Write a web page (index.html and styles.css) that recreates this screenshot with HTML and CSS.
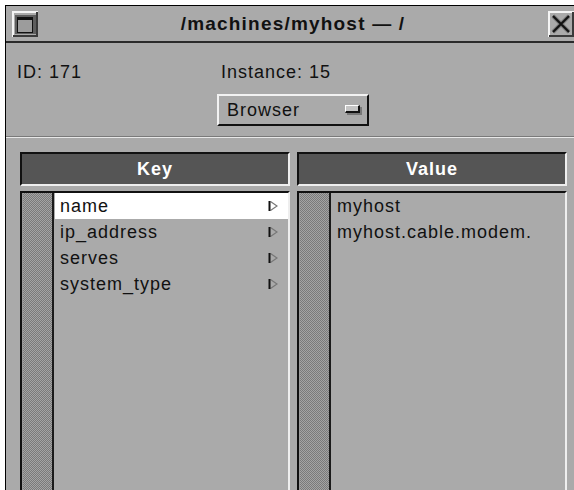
FILE: index.html
```html
<!DOCTYPE html>
<html lang="en">
<head>
<meta charset="utf-8">
<title>/machines/myhost — /</title>
<link rel="stylesheet" href="styles.css">
</head>
<body>
<div class="window">
  <header class="titlebar">
    <button class="tb-btn" aria-label="Window menu">
      <svg width="26" height="26" viewBox="0 0 26 26">
        <rect width="26" height="26" fill="#aaa"/>
        <path d="M0 0H26V2H2V26H0Z" fill="#f4f4f4"/>
        <path d="M26 1V26H1V24H24V1Z" fill="#3a3a3a"/>
        <rect x="3" y="4" width="21" height="19" fill="#5e5e5e"/>
        <rect x="5" y="6" width="16" height="16" fill="#111"/>
        <rect x="6" y="9" width="14" height="12" fill="#9c9c9c"/>
      </svg>
    </button>
    <h1 class="title">/machines/myhost — /</h1>
    <button class="tb-btn" aria-label="Close">
      <svg width="26" height="26" viewBox="0 0 26 26">
        <rect width="26" height="26" fill="#aaa"/>
        <path d="M0 0H26V2H2V26H0Z" fill="#f4f4f4"/>
        <path d="M26 1V26H1V24H24V1Z" fill="#3a3a3a"/>
        <path d="M5 5L21 21M21 5L5 21" stroke="#777" stroke-width="4"/>
        <path d="M5 5L21 21M21 5L5 21" stroke="#111" stroke-width="2"/>
      </svg>
    </button>
  </header>

  <section class="info">
    <div class="info-row">
      <span class="id">ID: 171</span>
      <span class="instance">Instance: 15</span>
    </div>
    <div class="picker">
      <button class="option-menu">Browser<span class="indicator"></span></button>
    </div>
  </section>

  <section class="table">
    <div class="column">
      <div class="col-head">Key</div>
      <div class="list">
        <div class="stripe"></div>
        <ul class="rows">
          <li class="row selected"><span>name</span>
            <svg class="arrow" width="10" height="12" viewBox="0 0 10 12"><path d="M2.5 1.5L9 6L2.5 10.5" fill="none" stroke="#777" stroke-width="1.2"/><path d="M1.5 1V11" stroke="#111" stroke-width="2"/></svg></li>
          <li class="row"><span>ip_address</span>
            <svg class="arrow" width="10" height="12" viewBox="0 0 10 12"><path d="M2.5 1.5L9 6L2.5 10.5" fill="none" stroke="#777" stroke-width="1.2"/><path d="M1.5 1V11" stroke="#111" stroke-width="2"/></svg></li>
          <li class="row"><span>serves</span>
            <svg class="arrow" width="10" height="12" viewBox="0 0 10 12"><path d="M2.5 1.5L9 6L2.5 10.5" fill="none" stroke="#777" stroke-width="1.2"/><path d="M1.5 1V11" stroke="#111" stroke-width="2"/></svg></li>
          <li class="row"><span>system_type</span>
            <svg class="arrow" width="10" height="12" viewBox="0 0 10 12"><path d="M2.5 1.5L9 6L2.5 10.5" fill="none" stroke="#777" stroke-width="1.2"/><path d="M1.5 1V11" stroke="#111" stroke-width="2"/></svg></li>
        </ul>
      </div>
    </div>
    <div class="column">
      <div class="col-head">Value</div>
      <div class="list">
        <div class="stripe"></div>
        <ul class="rows">
          <li class="row"><span>myhost</span></li>
          <li class="row"><span>myhost.cable.modem.</span></li>
        </ul>
      </div>
    </div>
  </section>
</div>
</body>
</html>
```

FILE: styles.css
```css
html, body {
  margin: 0;
  padding: 0;
  background: #ffffff;
  overflow: hidden;
}

body {
  font-family: "Liberation Sans", Arial, sans-serif;
  font-size: 18px;
  letter-spacing: 1px;
  color: #111;
}

.window {
  box-sizing: border-box;
  margin: 5px 0 0 5px;
  width: 575px;
  height: 485px;
  border-top: 1px solid #000;
  border-left: 1px solid #000;
  background: #aaa;
  display: flex;
  flex-direction: column;
}

/* title bar */
.titlebar {
  flex: none;
  height: 35px;
  display: flex;
  align-items: center;
  padding: 0 6px;
  border-bottom: 2px solid #2b2b2b;
}

.tb-btn {
  width: 26px;
  height: 26px;
  padding: 0;
  margin: 0;
  border: 0;
  background: none;
  display: block;
}

.tb-btn svg {
  display: block;
}

.title {
  flex: 1;
  margin: 0;
  text-align: center;
  font-size: 19px;
  font-weight: bold;
  letter-spacing: 1.2px;
  color: #111;
}

/* id / instance / view picker */
.info {
  flex: none;
  padding: 18px 0 10px;
  border-bottom: 1px solid #7a7a7a;
}

.info-row {
  display: flex;
  line-height: 22px;
  padding-left: 11px;
}

.id {
  width: 204px;
}

.picker {
  display: flex;
  justify-content: center;
  margin-top: 11px;
}

.option-menu {
  box-sizing: border-box;
  width: 152px;
  height: 32px;
  display: flex;
  align-items: center;
  justify-content: space-between;
  padding: 0 7px 0 8px;
  background: #aaa;
  border-top: 2px solid #f2f2f2;
  border-left: 2px solid #f2f2f2;
  border-bottom: 2px solid #111;
  border-right: 2px solid #111;
  font: inherit;
  letter-spacing: 1px;
  color: #111;
}

.indicator {
  box-sizing: border-box;
  width: 15px;
  height: 8px;
  background: #c4c4c4;
  border-top: 1px solid #fff;
  border-left: 1px solid #fff;
  border-bottom: 2px solid #111;
  border-right: 2px solid #111;
  box-shadow: 2px 2px 0 #777;
  margin-bottom: 2px;
}

/* key / value table */
.table {
  flex: 1;
  min-height: 0;
  display: flex;
  gap: 7px;
  padding: 14px 13px 0 14px;
  border-top: 1px solid #e8e8e8;
}

.column {
  flex: 1;
  display: flex;
  flex-direction: column;
  min-width: 0;
}

.col-head {
  box-sizing: border-box;
  height: 34px;
  line-height: 30px;
  text-align: center;
  background: #555;
  color: #fff;
  font-weight: bold;
  border-top: 2px solid #111;
  border-left: 2px solid #111;
  border-bottom: 2px solid #eee;
  border-right: 2px solid #eee;
}

.list {
  flex: 1;
  margin-top: 5px;
  display: flex;
  border-top: 2px solid #111;
  border-left: 2px solid #111;
  border-right: 2px solid #eee;
}

/* stippled gutter beside each list */
.stripe {
  flex: none;
  width: 29px;
  background: repeating-conic-gradient(#7a7a7a 0 25%, #a4a4a4 0 50%) 0 0 / 2px 2px;
  border-left: 1px solid #9a9a9a;
  border-right: 2px solid #1a1a1a;
}

.rows {
  flex: 1;
  list-style: none;
  margin: 0;
  padding: 0 0 0 1px;
}

.row {
  height: 26px;
  display: flex;
  align-items: center;
  justify-content: space-between;
  padding: 0 10px 0 5px;
}

.row.selected {
  background: #fff;
}

.arrow {
  display: block;
}
```
